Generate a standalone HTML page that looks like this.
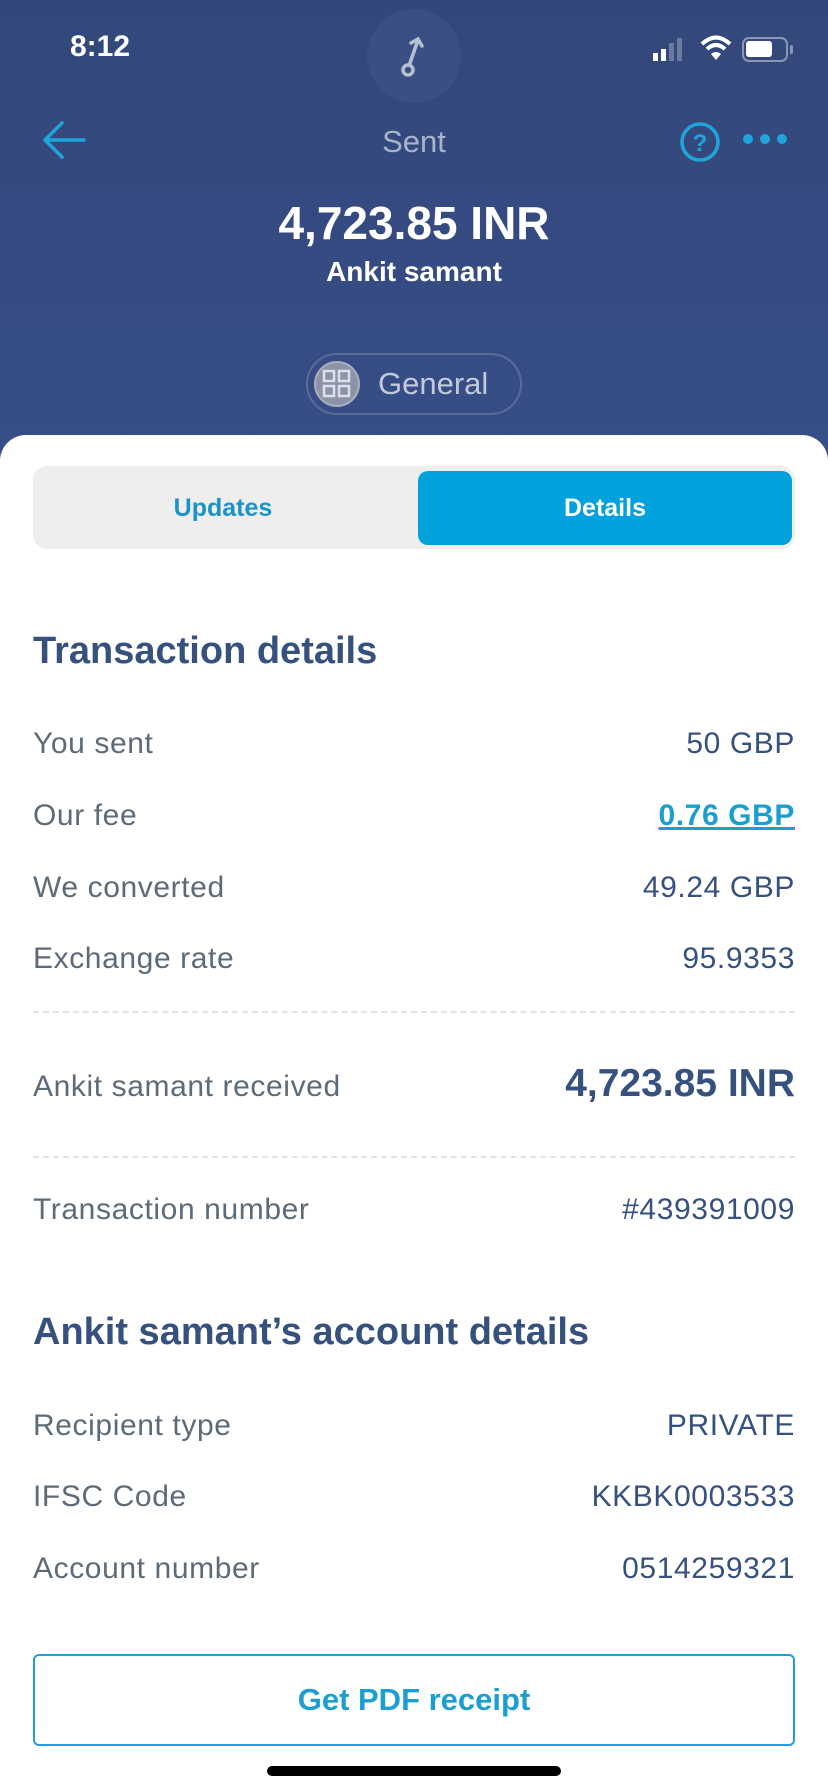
<!DOCTYPE html>
<html><head><meta charset="utf-8"><style>
*{margin:0;padding:0;box-sizing:border-box}
body{width:828px;height:1792px;overflow:hidden;font-family:"Liberation Sans",sans-serif;background:#fff;position:relative}
.hdr{position:absolute;left:0;top:0;width:828px;height:470px;background:linear-gradient(180deg,#33477a 0%,#354b82 60%,#374e88 100%)}
.abs{position:absolute}
.sheet{position:absolute;left:0;top:435px;width:828px;height:1357px;background:#fff;border-radius:26px 26px 0 0}
.row{position:absolute;left:33px;width:762px;font-size:30px;letter-spacing:0.6px;color:#5d6b78;display:flex;justify-content:space-between;align-items:baseline}
.row .v{color:#37517e}
h2{position:absolute;left:33px;font-size:38px;color:#37517e;font-weight:bold}
.dash{position:absolute;left:33px;width:762px;border-top:2px dashed #dfe3e8}
</style></head><body>
<div class="hdr"></div>
<div class="abs" style="left:70px;top:30px;font-size:30px;color:#fff;font-weight:bold">8:12</div>
<div class="abs" style="left:367px;top:9px;width:94px;height:94px;border-radius:50%;background:#3a4f84"></div>
<svg class="abs" style="left:395px;top:35px" width="36" height="45" viewBox="0 0 36 45"><circle cx="13" cy="35" r="5" fill="none" stroke="#b7bfd3" stroke-width="3.5"/><path d="M15 28 L23 5 M16 8 L23 4 L27 11" fill="none" stroke="#b7bfd3" stroke-width="3.5" stroke-linecap="round"/></svg>
<svg class="abs" style="left:652px;top:36px" width="36" height="26"><rect x="1" y="17" width="5" height="8" fill="#fff"/><rect x="9" y="13" width="5" height="12" fill="#fff"/><rect x="17" y="7" width="5" height="18" fill="#6a7aa0"/><rect x="25" y="2" width="5" height="23" fill="#6a7aa0"/></svg>
<svg class="abs" style="left:700px;top:34px" width="32" height="28" viewBox="0 0 32 28"><path d="M2 10 Q16 -3 30 10" stroke="#fff" stroke-width="4" fill="none"/><path d="M7 15 Q16 7 25 15" stroke="#fff" stroke-width="4" fill="none"/><path d="M11 20 L16 26 L21 20 Q16 16 11 20Z" fill="#fff"/></svg>
<div class="abs" style="left:742px;top:37px;width:46px;height:25px;border:2.5px solid #8a96b3;border-radius:7px"><div style="margin:2px;width:26px;height:16px;background:#fff;border-radius:3px"></div></div>
<div class="abs" style="left:790px;top:45px;width:3px;height:9px;background:#8a96b3;border-radius:2px"></div>
<svg class="abs" style="left:42px;top:120px" width="44" height="40"><path d="M42 20 H4 M20 3 L3 20 L20 37" fill="none" stroke="#1fa5dc" stroke-width="3.5" stroke-linecap="round" stroke-linejoin="round"/></svg>
<div class="abs" style="left:0;width:828px;top:124px;text-align:center;font-size:31px;color:#a9b3c9">Sent</div>
<svg class="abs" style="left:679px;top:121px" width="42" height="42"><circle cx="21" cy="21" r="18" fill="none" stroke="#1fa5dc" stroke-width="3.5"/><text x="21" y="30" text-anchor="middle" font-family="Liberation Sans" font-weight="bold" font-size="24" fill="#1fa5dc">?</text></svg>
<div class="abs" style="left:743px;top:134px;width:10px;height:10px;border-radius:50%;background:#1fa5dc"></div>
<div class="abs" style="left:760px;top:134px;width:10px;height:10px;border-radius:50%;background:#1fa5dc"></div>
<div class="abs" style="left:777px;top:134px;width:10px;height:10px;border-radius:50%;background:#1fa5dc"></div>
<div class="abs" style="left:0;width:828px;top:196px;text-align:center;font-size:46px;color:#fff;font-weight:bold">4,723.85 INR</div>
<div class="abs" style="left:0;width:828px;top:256px;text-align:center;font-size:28px;color:#fff;font-weight:bold">Ankit samant</div>
<div class="abs" style="left:306px;top:353px;width:216px;height:62px;border:2px solid #5b6c98;border-radius:31px"></div>
<div class="abs" style="left:314px;top:361px;width:46px;height:46px;border-radius:50%;background:#8c93a8;border:2px solid #a8aec0"></div>
<svg class="abs" style="left:322px;top:369px" width="30" height="30"><g fill="none" stroke="#dde0e8" stroke-width="2.5"><rect x="2" y="2" width="10" height="10"/><rect x="17" y="2" width="10" height="10"/><rect x="2" y="17" width="10" height="10"/><rect x="17" y="17" width="10" height="10"/></g></svg>
<div class="abs" style="left:378px;top:366px;font-size:31px;color:#c3c9da">General</div>
<div class="sheet"></div>
<div class="abs" style="left:33px;top:466px;width:762px;height:83px;background:#eeeeee;border-radius:14px"></div>
<div class="abs" style="left:33px;top:494px;width:380px;text-align:center;font-size:25px;color:#1a94c8;font-weight:bold">Updates</div>
<div class="abs" style="left:418px;top:471px;width:374px;height:74px;background:#00a1dd;border-radius:10px;text-align:center;line-height:74px;font-size:25px;color:#fff;font-weight:bold">Details</div>
<h2 style="top:630px">Transaction details</h2>
<div class="row" style="top:727px"><span>You sent</span><span class="v">50 GBP</span></div>
<div class="row" style="top:799px"><span>Our fee</span><span style="color:#1a9fd0;font-weight:bold;text-decoration:underline">0.76 GBP</span></div>
<div class="row" style="top:871px"><span>We converted</span><span class="v">49.24 GBP</span></div>
<div class="row" style="top:942px"><span>Exchange rate</span><span class="v">95.9353</span></div>
<div class="dash" style="top:1011px"></div>
<div class="row" style="top:1062px"><span>Ankit samant received</span><span class="v" style="font-size:39px;font-weight:bold;letter-spacing:0">4,723.85 INR</span></div>
<div class="dash" style="top:1156px"></div>
<div class="row" style="top:1193px"><span>Transaction number</span><span class="v">#439391009</span></div>
<h2 style="top:1311px">Ankit samant’s account details</h2>
<div class="row" style="top:1409px"><span>Recipient type</span><span class="v">PRIVATE</span></div>
<div class="row" style="top:1480px"><span>IFSC Code</span><span class="v">KKBK0003533</span></div>
<div class="row" style="top:1552px"><span>Account number</span><span class="v">0514259321</span></div>
<div class="abs" style="left:33px;top:1654px;width:762px;height:92px;border:2px solid #1ea0d6;border-radius:6px;text-align:center;line-height:88px;font-size:31px;color:#1a9fd0;font-weight:bold">Get PDF receipt</div>
<div class="abs" style="left:267px;top:1766px;width:294px;height:10px;border-radius:5px;background:#000"></div>
</body></html>
